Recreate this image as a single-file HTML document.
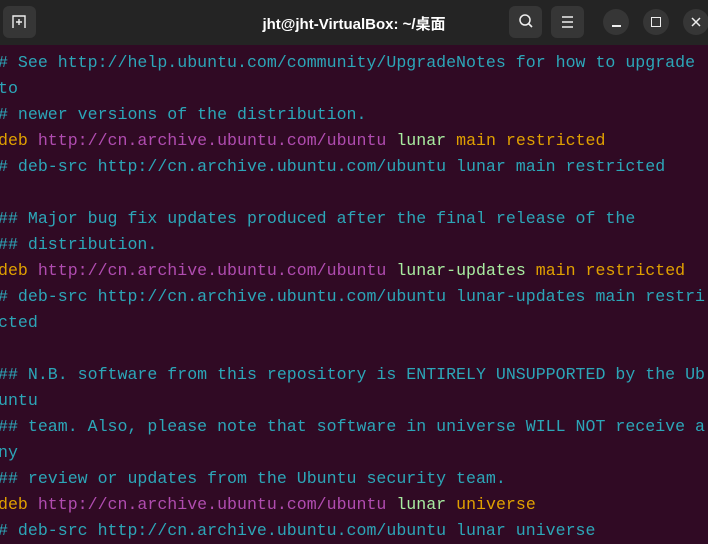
<!DOCTYPE html>
<html><head><meta charset="utf-8"><style>
html,body{margin:0;padding:0;width:708px;height:543px;overflow:hidden;background:#300a24}
.hdr{position:absolute;left:0;top:0;width:708px;height:45px;background:#242424}
.btn{position:absolute;background:#363636;border-radius:6px}
.circ{position:absolute;width:26px;height:26px;border-radius:50%;background:#363636;top:9px}
.title{position:absolute;left:0;width:708px;top:13px;text-align:center;color:#fff;font:bold 15px "Liberation Sans","Noto Sans CJK SC",sans-serif}
pre{position:absolute;left:-2px;top:50px;margin:0;font:16.6px/26px "Liberation Mono",monospace;color:#2ca6b8;white-space:pre}
.y{color:#e0a000}.p{color:#b04cb0}.g{color:#a8eca0}
</style></head><body>
<div class="hdr">
<div class="btn" style="left:3px;top:6px;width:33px;height:32px"></div>
<svg style="position:absolute;left:11px;top:15px" width="16" height="14" viewBox="0 0 16 14"><path d="M2 13V1h12v12M8 4v6M5 7h6" fill="none" stroke="#eee" stroke-width="1.4"/></svg>
<div class="title">jht@jht-VirtualBox: ~/桌面</div>
<div class="btn" style="left:509px;top:6px;width:33px;height:32px"></div>
<svg style="position:absolute;left:518px;top:13px" width="16" height="16" viewBox="0 0 16 16"><circle cx="7" cy="7" r="5" fill="none" stroke="#eee" stroke-width="1.5"/><path d="M10.5 10.5L14 14" stroke="#eee" stroke-width="1.6"/></svg>
<div class="btn" style="left:551px;top:6px;width:33px;height:32px"></div>
<svg style="position:absolute;left:560px;top:15px" width="16" height="14"><path d="M2 2h11M2 7h11M2 12h11" stroke="#eee" stroke-width="1.4"/></svg>
<div class="circ" style="left:603px"></div>
<div style="position:absolute;left:612px;top:25px;width:9px;height:1.5px;background:#eee"></div>
<div class="circ" style="left:643px"></div>
<div style="position:absolute;left:651px;top:17px;width:8px;height:8px;border:1.5px solid #eee"></div>
<div class="circ" style="left:683px"></div>
<svg style="position:absolute;left:691px;top:17px" width="10" height="10"><path d="M1 1l8 8M9 1l-8 8" stroke="#eee" stroke-width="1.5"/></svg>
</div>
<pre># See http://help.ubuntu.com/community/UpgradeNotes for how to upgrade
to
# newer versions of the distribution.
<span class="y">deb</span> <span class="p">http://cn.archive.ubuntu.com/ubuntu</span> <span class="g">lunar</span> <span class="y">main restricted</span>
# deb-src http://cn.archive.ubuntu.com/ubuntu lunar main restricted

## Major bug fix updates produced after the final release of the
## distribution.
<span class="y">deb</span> <span class="p">http://cn.archive.ubuntu.com/ubuntu</span> <span class="g">lunar-updates</span> <span class="y">main restricted</span>
# deb-src http://cn.archive.ubuntu.com/ubuntu lunar-updates main restri
cted

## N.B. software from this repository is ENTIRELY UNSUPPORTED by the Ub
untu
## team. Also, please note that software in universe WILL NOT receive a
ny
## review or updates from the Ubuntu security team.
<span class="y">deb</span> <span class="p">http://cn.archive.ubuntu.com/ubuntu</span> <span class="g">lunar</span> <span class="y">universe</span>
# deb-src http://cn.archive.ubuntu.com/ubuntu lunar universe</pre>
</body></html>
